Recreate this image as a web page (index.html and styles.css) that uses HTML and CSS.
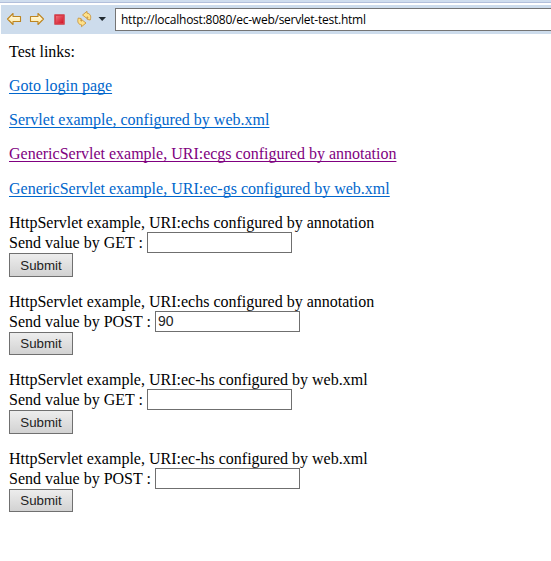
FILE: index.html
```html
<!DOCTYPE html>
<html lang="en">
<head>
<meta charset="utf-8">
<title>Servlet test</title>
<link rel="stylesheet" href="styles.css">
</head>
<body>
<div class="strip"></div>
<header class="toolbar">
  <svg class="icons" width="114" height="29" viewBox="0 0 114 29" aria-hidden="true">
    <defs>
      <linearGradient id="gold" x1="0" y1="0" x2="0" y2="1"><stop offset="0" stop-color="#fffdec"/><stop offset="1" stop-color="#ffe69b"/></linearGradient>
      <linearGradient id="red" x1="0" y1="0" x2="1" y2="1"><stop offset="0" stop-color="#ee6f78"/><stop offset="1" stop-color="#d31427"/></linearGradient>
    </defs>
    <g fill="url(#gold)" stroke="#bd8521" stroke-width="1.1" stroke-linejoin="round">
      <path d="M6.5 14L12 8.5V11.5H19.5V16.5H12V19.5Z"/>
      <path d="M42.5 14L37 8.5V11.5H29.5V16.5H37V19.5Z"/>
    </g>
    <rect x="53.5" y="9.5" width="10" height="10" rx=".5" fill="#d83a48" stroke="#cf616c"/>
    <rect x="55" y="11" width="7" height="7" fill="url(#red)"/>
    <g fill="#ffe189" stroke="#c58b2d" stroke-width=".8" stroke-linejoin="round">
      <path d="M81.5 10L86 6.3V8.2C89 8.4 90.6 11 89.2 15L86.3 14.4C87 12.5 87 11.8 86 11.8V13.5Z"/>
      <path d="M85 18L80.5 21.7V19.8C77.5 19.6 75.9 17 77.3 13L80.2 13.6C79.5 15.5 79.5 16.2 80.5 16.2V14.5Z"/>
    </g>
    <path d="M97.5 12H105L101.2 16Z" fill="#222b32"/>
  </svg>
  <div class="address">http://localhost:8080/ec-web/servlet-test.html</div>
</header>
<main>
  <p>Test links:</p>
  <p><a href="#login">Goto login page</a></p>
  <p><a href="#servlet">Servlet example, configured by web.xml</a></p>
  <p><a class="visited" href="#ecgs">GenericServlet example, URI:ecgs configured by annotation</a></p>
  <p><a href="#ec-gs">GenericServlet example, URI:ec-gs configured by web.xml</a></p>
  <form>
    <div class="title">HttpServlet example, URI:echs configured by annotation</div>
    <label class="field"><span class="get">Send value by GET :</span><input type="text"></label>
    <button type="button">Submit</button>
  </form>
  <form>
    <div class="title">HttpServlet example, URI:echs configured by annotation</div>
    <label class="field"><span class="post">Send value by POST :</span><input type="text" value="90"></label>
    <button type="button">Submit</button>
  </form>
  <form>
    <div class="title">HttpServlet example, URI:ec-hs configured by web.xml</div>
    <label class="field"><span class="get">Send value by GET :</span><input type="text"></label>
    <button type="button">Submit</button>
  </form>
  <form>
    <div class="title">HttpServlet example, URI:ec-hs configured by web.xml</div>
    <label class="field"><span class="post">Send value by POST :</span><input type="text"></label>
    <button type="button">Submit</button>
  </form>
</main>
</body>
</html>
```
FILE: styles.css
```css
* { box-sizing: border-box; }
body {
  margin: 0;
  height: 561px;
  overflow: hidden;
  background: #fff;
  color: #000;
  font: 16px/18.25px "Liberation Serif", serif;
}
.strip { height: 3px; background: #cfddee; border-bottom: 1px solid #b2bfdb; }
.toolbar {
  display: flex;
  height: 29px;
  margin: 2px 0 0 1px;
  background: #cddcec;
}
.icons { flex: none; display: block; }
.address {
  flex: 1;
  height: 23px;
  margin-top: 3px;
  padding-left: 5px;
  border: 1px solid #747474;
  border-right: 0;
  background: #fff;
  font: 12px/21px "Open Sans", sans-serif;
  letter-spacing: -0.24px;
  white-space: nowrap;
}
main { padding: 8.5px 9px 0; }
p { margin: 0 0 16px; white-space: nowrap; }
a { color: #0066cc; text-underline-offset: 2px; text-decoration-thickness: 1px; text-decoration-skip-ink: none; }
.visited { color: #800080; }
form { margin: 0 0 16px; }
form:first-of-type { margin-top: 16.4px; }
.title { white-space: nowrap; }
.field { display: flex; height: 20.75px; line-height: 21.25px; white-space: nowrap; }
.get { width: 138px; }
.post { width: 146px; }
input {
  width: 145px;
  height: 21px;
  margin: 0;
  padding: 0 2px;
  border: 1px solid #6f6f6f;
  border-radius: 0;
  background: #fff;
  color: #222;
  font: 14px "Liberation Sans", sans-serif;
}
button {
  display: block;
  width: 64px;
  height: 23.5px;
  margin: 0;
  padding: 1px 0 0;
  border: 1px solid #707070;
  border-radius: 0;
  background: linear-gradient(#ededed, #d2d2d2);
  color: #222;
  font: 13.3px "Liberation Sans", sans-serif;
}
```
